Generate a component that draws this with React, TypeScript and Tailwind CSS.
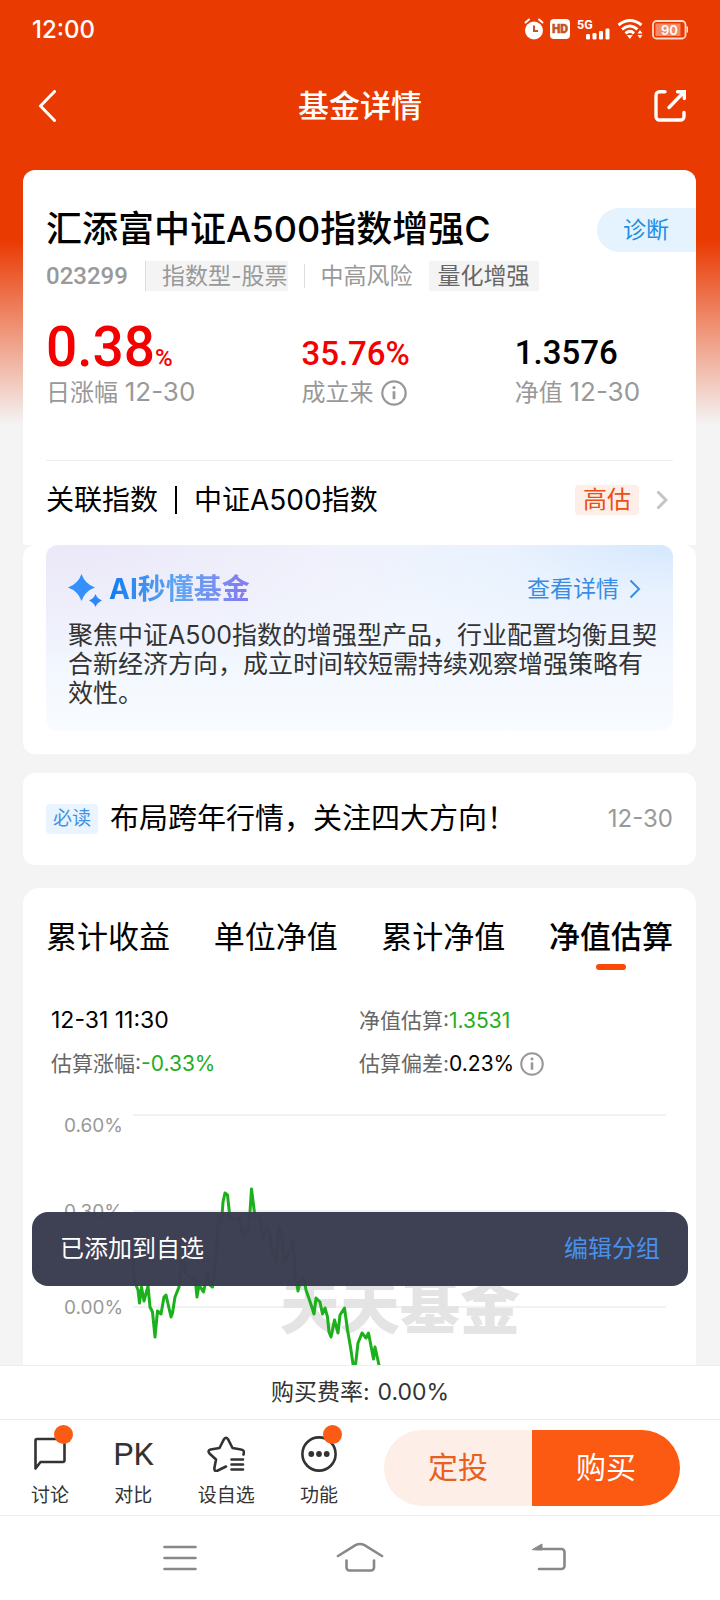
import React from "react";

const TABS = ["累计收益", "单位净值", "累计净值", "净值估算"];

const POINTS: [number, number][] = [
  [87, 150], [88, 180], [92, 190], [93.5, 203], [95.5, 187], [98, 201], [102, 186], [104, 207], [106.5, 212],
  [109, 237], [111.5, 211], [115, 214], [118, 197], [120, 195], [125, 217], [126.5, 213], [129, 197], [133, 187],
  [136, 160], [138, 160], [139.5, 173], [144.5, 178], [149, 177], [151, 197], [153, 185], [157.5, 192],
  [161.5, 173], [164, 185], [166.5, 187], [170, 157], [172.5, 118], [175.5, 123], [177, 102], [179, 93],
  [181.5, 95], [184, 118], [188, 119], [193, 118], [196, 132], [198.5, 136], [203, 127], [205.5, 89], [209, 117],
  [214, 116], [217, 139], [221, 127], [223.5, 132], [226, 150], [230, 162], [232.5, 127], [235.5, 133],
  [238.5, 162], [243, 153], [247, 140], [249.5, 177], [252, 191], [254.5, 180], [258, 179], [260, 190],
  [263.5, 200], [268, 214], [270, 198], [274, 202], [276.5, 214], [279, 208], [281.5, 217], [283, 232],
  [285, 237], [288.5, 220], [292, 233], [294, 215], [298.5, 208], [301.5, 230], [304.5, 247], [307, 264],
  [309.5, 265], [312, 243], [316, 233], [320, 238], [322.5, 233], [327.5, 259], [329, 247], [333, 265], [336, 285],
];

const GRID = [
  { y: 15, label: "0.60%", labelY: 32 },
  { y: 111, label: "0.30%", labelY: 118 },
  { y: 207, label: "0.00%", labelY: 214 },
];

function InfoIcon({ className }: { className: string }) {
  return (
    <svg viewBox="0 0 26 26" className={className} fill="none" stroke="currentColor" aria-hidden="true">
      <circle cx="13" cy="13" r="11.7" strokeWidth="2.2" />
      <circle cx="13" cy="7.6" r="1.6" fill="currentColor" stroke="none" />
      <path d="M13 11.2v8" strokeWidth="2.8" />
    </svg>
  );
}

function Chevron({ className }: { className: string }) {
  return (
    <svg viewBox="0 0 12 20" className={className} fill="none" stroke="currentColor" aria-hidden="true">
      <path d="M1.5 1.5 10 10l-8.5 8.5" />
    </svg>
  );
}

function StatusBar() {
  return (
    <div className="flex h-[58px] items-center justify-between pr-[32px] pl-8 text-white">
      <span className="mt-px text-2xl font-medium">12:00</span>
      <svg viewBox="0 0 164 24" className="h-6 w-[164px]" fill="none" aria-hidden="true">
        <g>
          <circle cx="10" cy="13.5" r="9" fill="#fff" />
          <path d="M1.500 5.500 5 2.500M18.500 5.500 15 2.500" stroke="#fff" strokeWidth="2" strokeLinecap="round" />
          <path d="M10 8.500v5.500h4" stroke="#c4532c" strokeWidth="2" />
        </g>
        <g>
          <rect x="26" y="2" width="20" height="20" rx="4" fill="#fff" />
          <text x="36" y="16.300" fontSize="12" fontFamily="Roboto, sans-serif" fontWeight="900" textAnchor="middle" fill="#c4532c" stroke="#c4532c" strokeWidth="0.500">HD</text>
        </g>
        <g fill="#fff">
          <text x="53" y="11.500" fontSize="12.500" fontWeight="700" fontFamily="Roboto, sans-serif">5G</text>
          <rect x="62" y="17" width="4" height="5.500" rx="1.200" />
          <rect x="68.5" y="16" width="4" height="6.500" rx="1.200" />
          <rect x="75" y="14" width="4" height="8.500" rx="1.200" />
          <rect x="81.5" y="11.500" width="4" height="11" rx="1.200" />
        </g>
        <g stroke="#fff" strokeWidth="3">
          <path d="M94.500 8q11.500-9 23 0" />
          <path d="M98 12.300q8-6.500 15.500 0" />
          <path d="M101.500 16.300q4.500-3.800 8.500 0" />
          <path d="M102.800 18h6l-3 4z" fill="#fff" stroke="none" />
          <path d="M113.500 16.500h5l-2.500-3.500zM113.500 18h5l-2.500 3.500z" fill="#fff" stroke="none" />
        </g>
        <g>
          <rect x="129" y="4" width="32.500" height="17.500" rx="3.500" stroke="#ffd9c9" strokeWidth="1.800" />
          <rect x="131.500" y="6.500" width="25" height="12.500" fill="#f58a67" />
          <rect x="162.500" y="9.500" width="1.500" height="6" fill="#ffd9c9" />
          <text x="145.500" y="17.500" fontSize="13" fontWeight="600" textAnchor="middle" fill="#fff">90</text>
        </g>
      </svg>
    </div>
  );
}

function Header() {
  return (
    <header className="shrink-0">
      <StatusBar />
      <div className="flex h-24 items-center justify-between pr-[34px] pl-[38px] text-white">
        <button aria-label="返回" className="flex w-7">
          <svg viewBox="0 0 18 32" className="h-8 w-[18px]" fill="none" stroke="currentColor" strokeWidth="3" strokeLinecap="round" strokeLinejoin="round">
            <path d="M16.500 1.500 2.500 16l14 14.500" />
          </svg>
        </button>
        <h1 className="text-[31px] font-medium">基金详情</h1>
        <button aria-label="分享" className="flex w-8">
          <svg viewBox="0 0 32 32" className="size-8" fill="none" stroke="currentColor" strokeWidth="3.4" strokeLinecap="round">
            <path d="M11 1.700H5.500a3.500 3.500 0 0 0-3.500 3.500V26.500A3.500 3.500 0 0 0 5.500 30h21a3.500 3.500 0 0 0 3.500-3.500V22.500" />
            <path d="M15 17.500 29 3M23.500 1.700h6.800V8.500" />
          </svg>
        </button>
      </div>
    </header>
  );
}

function SummaryCard() {
  return (
    <section className="rounded-t-xl bg-white px-[23px] pt-[35px]">
      <div className="-mr-[23px] flex h-12 items-center justify-between">
        <h2 className="text-[36px] font-medium text-black">汇添富中证A500指数增强C</h2>
        <button className="mt-[2px] h-11 rounded-l-full bg-[#e5f3fe] pr-[27px] pl-[26px] text-[23px] text-[#1c90e6]">诊断</button>
      </div>
      <div className="mt-2 flex h-[30px] items-center text-[23px] leading-[30px] text-[#999]">
        <span className="w-[99px] font-['Roboto',sans-serif] text-2xl font-medium">023299</span>
        <span className="border-l border-[#ddd] bg-[#f4f4f4] pl-4">指数型-股票</span>
        <span className="ml-4 h-6 w-px bg-[#ddd]" />
        <span className="ml-4">中高风险</span>
        <span className="ml-4 bg-[#f4f4f4] px-[9px] text-[#666]">量化增强</span>
      </div>
      <dl className="mt-[19px] grid grid-cols-[255fr_213fr_158fr] text-2xl text-[#999]">
        <div className="flex flex-col-reverse">
          <dt className="leading-[33px]">日涨幅 <span className="text-[26px]">12-30</span></dt>
          <dd className="flex h-[65px] items-baseline font-['Roboto',sans-serif] font-medium text-[#f40000]">
            <span className="text-[55px] leading-[74px]">0.38</span>
            <span className="text-[24px]">%</span>
          </dd>
        </div>
        <div className="flex flex-col-reverse">
          <dt className="flex items-center gap-2 leading-[33px]">
            成立来
            <InfoIcon className="size-[26px]" />
          </dt>
          <dd className="font-['Roboto',sans-serif] text-[33px] leading-[44px] font-medium text-[#f40000]">35.76%</dd>
        </div>
        <div className="flex flex-col-reverse">
          <dt className="leading-[33px]">净值 <span className="text-[26px]">12-30</span></dt>
          <dd className="font-['Roboto',sans-serif] text-[33px] leading-[44px] font-medium text-black">1.3576</dd>
        </div>
      </dl>
      <div className="mt-[51px] border-t border-[#eee] pb-[7px]">
        <a href="#index" className="flex h-[77px] items-center text-[28px] text-black">
          <span>关联指数</span>
          <span className="mr-[17px] ml-[17px] h-7 w-[2px] bg-black" />
          <span>中证A500指数</span>
          <span className="ml-auto rounded bg-[#feeee8] px-2 text-2xl leading-[30px] text-[#ea4f14]">高估</span>
          <Chevron className="mr-[5px] ml-[17px] h-5 w-3 stroke-3 text-[#c4c4c4]" />
        </a>
      </div>
    </section>
  );
}

function AiCard() {
  return (
    <section className="rounded-xl bg-white px-[23px] pb-[23px]">
      <div className="rounded-xl bg-[linear-gradient(rgba(248,252,255,0)_50%,#f9fcff_100%),radial-gradient(ellipse_at_100%_0%,#d5e8fe_0%,rgba(225,238,254,0.6)_18%,rgba(240,246,255,0)_40%),radial-gradient(ellipse_at_0%_0%,#ebe8f9_0%,rgba(238,237,250,0.8)_25%,rgba(243,245,253,0)_50%),linear-gradient(#f4f7fe,#eef5ff)] pt-6 pr-[11px] pb-[23px] pl-[22px]">
        <div className="flex h-10 items-center">
          <svg viewBox="0 0 34 34" className="mt-1 h-[34px] w-[34px]" aria-hidden="true">
            <path d="M13.500 0Q17 10 27 13.500 17 17 13.500 27 10 17 0 13.500 10 10 13.500 0Z" fill="#3690fb" />
            <path d="M27.500 20Q29 24.500 34 26.500 29 28.500 27.500 33 26 28.500 21 26.500 26 24.500 27.500 20Z" fill="#2f86f7" />
          </svg>
          <h3 className="ml-[7px] bg-linear-to-r from-[#087cf0] via-[#5fa5f5] to-[#8479ee] bg-clip-text text-[28px] font-bold text-transparent">AI秒懂基金</h3>
          <a href="#detail" className="mr-[21px] ml-auto flex items-center gap-[10px] text-[23px] text-[#3a8de2]">
            查看详情
            <Chevron className="h-5 w-3 stroke-2" />
          </a>
        </div>
        <p className="mt-3 text-[25px] leading-[29px] text-[#333]">
          聚焦中证A500指数的增强型产品，行业配置均衡且契合新经济方向，成立时间较短需持续观察增强策略有效性。
        </p>
      </div>
    </section>
  );
}

function NoticeCard() {
  return (
    <a href="#notice" className="mt-[19px] flex h-[92px] items-center rounded-xl bg-white px-[23px]">
      <span className="rounded bg-[#e9f4ff] px-[7px] text-[19px] leading-[30px] text-[#3d92e4]">必读</span>
      <span className="ml-3 text-[29px] text-black">布局跨年行情，关注四大方向！</span>
      <time className="ml-auto text-2xl text-[#999]">12-30</time>
    </a>
  );
}

function ChartCard() {
  return (
    <section className="mt-[23px] rounded-t-2xl bg-white px-[23px] pt-[29px]">
      <div role="tablist" className="flex justify-between text-[31px] text-black">
        {TABS.map((tab) => {
          const active = tab === "净值估算";
          return (
            <button key={tab} role="tab" aria-selected={active} className="flex flex-col items-center">
              <span className={active ? "leading-10 font-medium" : "leading-10"}>{tab}</span>
              {active && <span className="mt-[7px] h-[6px] w-[30px] rounded-[3px] bg-[#fb4a08]" />}
            </button>
          );
        })}
      </div>
      <div className="mt-[29px] grid grid-cols-[308fr_314fr] pl-[5px] text-[21px] leading-[43px] text-[#666]">
        <time className="text-[23px] text-black">12-31 11:30</time>
        <span>净值估算:<span className="text-[#1fae1f]">1.3531</span></span>
        <span>估算涨幅:<span className="text-[#1fae1f]">-0.33%</span></span>
        <span className="flex items-center">
          估算偏差:<span className="text-black">0.23%</span>
          <InfoIcon className="ml-[6px] size-6 text-[#999]" />
        </span>
      </div>
      <svg viewBox="0 0 627 320" className="mt-[15px] block w-full" role="img" aria-label="净值估算走势">
        <text x="234" y="229" fontSize="60" fontWeight="900" fill="#e4e4e4">天天基金</text>
        {GRID.map((g) => (
          <g key={g.label}>
            <line x1="87" x2="620" y1={g.y} y2={g.y} stroke="#e4e4e4" strokeWidth="1" />
            <text x="18" y={g.labelY} fontSize="19" fill="#999">{g.label}</text>
          </g>
        ))}
        <polyline points={POINTS.map((p) => p.join(",")).join(" ")} fill="none" stroke="#1cb01c" strokeWidth="3" strokeLinejoin="round" />
      </svg>
    </section>
  );
}

function Toast() {
  return (
    <div role="status" className="absolute inset-x-8 bottom-[79px] flex h-[74px] items-center justify-between rounded-2xl bg-[#3a3c50]/98 px-7 text-2xl text-white">
      <span>已添加到自选</span>
      <button className="text-[#4890ea]">编辑分组</button>
    </div>
  );
}

function Action({ label, badge, children }: { label: string; badge?: boolean; children: React.ReactNode }) {
  return (
    <button className="flex flex-col items-center">
      <span className="relative flex h-10 w-9 items-center justify-center">
        {children}
        {badge && <span className="absolute -top-[9px] -right-[5px] size-[19px] rounded-full bg-[#fb5b14]" />}
      </span>
      <span className="mt-2 text-[19px] leading-7">{label}</span>
    </button>
  );
}

function BottomBar() {
  return (
    <footer className="shrink-0 bg-white text-[#333]">
      <div className="flex h-[54px] items-center justify-center gap-2 border-t border-[#eee] text-[23px]">
        <span>购买费率:</span>
        <span>0.00%</span>
      </div>
      <div className="flex h-24 items-center border-t border-[#eaeaea] pr-10 pl-[31px]">
        <div className="flex flex-[307] justify-between pt-2">
          <Action label="讨论" badge>
            <svg viewBox="0 0 32 34" className="h-[34px] w-8" fill="none" stroke="#333" strokeWidth="2.6" strokeLinejoin="round">
              <path d="M1.500 31.500V3.500a1.500 1.500 0 0 1 1.500-1.500H29a1.500 1.500 0 0 1 1.500 1.500V23.500a1.500 1.500 0 0 1-1.500 1.500H6.500z" />
            </svg>
          </Action>
          <Action label="对比">
            <span className="font-['Roboto',sans-serif] text-[32px] leading-10">PK</span>
          </Action>
          <Action label="设自选">
            <svg viewBox="0 0 38 36" className="h-9 w-[38px] shrink-0" fill="none" stroke="#333" strokeWidth="2.6" strokeLinejoin="round" strokeLinecap="round">
              <path d="M36.500 18.500Q38 14 34 13.500L25.500 12 21 3.200Q19 .2 17 3.200L12.500 12 3.500 13.500Q.2 14.500 2.500 17.500L9 23.500 7.300 32.500Q7.500 36 10.800 34.500L19 30.500" />
              <path d="M24.500 23.500H36M24.500 28.500H36M24.500 33.500H36" />
            </svg>
          </Action>
          <Action label="功能" badge>
            <svg viewBox="0 0 36 36" className="size-9" fill="none" stroke="#333" strokeWidth="2.6">
              <circle cx="18" cy="18" r="16.6" />
              <g fill="#333" stroke="none">
                <circle cx="10.3" cy="18" r="2.9" />
                <circle cx="18" cy="18" r="2.9" />
                <circle cx="25.7" cy="18" r="2.9" />
              </g>
            </svg>
          </Action>
        </div>
        <div className="ml-[46px] flex h-[76px] flex-[296] overflow-hidden rounded-full text-[30px]">
          <button className="flex-1 bg-[#fdeee7] text-[#e8601f]">定投</button>
          <button className="flex-1 bg-[#fc5a13] text-white">购买</button>
        </div>
      </div>
      <nav className="grid h-[85px] grid-cols-3 items-center border-t border-[#eee] px-[90px] text-[#888]">
        <button aria-label="最近任务" className="flex justify-center">
          <svg viewBox="0 0 48 32" className="h-8 w-12" fill="none" stroke="currentColor" strokeWidth="2.6" strokeLinecap="round">
            <path d="M8.500 5h31M8.500 16h31M8.500 27h31" />
          </svg>
        </button>
        <button aria-label="主屏幕" className="flex justify-center">
          <svg viewBox="0 0 48 32" className="h-8 w-12" fill="none" stroke="currentColor" strokeWidth="2.6" strokeLinecap="round" strokeLinejoin="round">
            <path d="M2 14 19.500 3.200Q24 .8 28.500 3.200L46 14" />
            <path d="M10.500 18.500V25.500a3 3 0 0 0 3 3H35a3 3 0 0 0 3-3V18.500" />
          </svg>
        </button>
        <button aria-label="返回上一页" className="flex justify-center">
          <svg viewBox="-11 0 52 32" className="h-8 w-[52px]" fill="none" stroke="currentColor" strokeWidth="2.6" strokeLinecap="round" strokeLinejoin="round">
            <path d="M11 7H36.500a3 3 0 0 1 3 3V24a3 3 0 0 1-3 3H14" />
            <path d="M7.500 7.500 17 2v5.500z" fill="currentColor" strokeWidth="1" />
          </svg>
        </button>
      </nav>
    </footer>
  );
}

export default function App() {
  return (
    <div className="flex h-screen flex-col bg-[#f4f4f4] bg-[linear-gradient(#e93a02_0px,#e93a02_240px,#f4f4f4_425px)] font-['Inter','Noto_Sans_CJK_SC',sans-serif]">
      <Header />
      <div className="relative min-h-0 flex-1">
        <main className="h-full overflow-y-auto pt-4 pr-6 pl-[23px] [scrollbar-width:none]">
          <SummaryCard />
          <AiCard />
          <NoticeCard />
          <ChartCard />
        </main>
        <Toast />
      </div>
      <BottomBar />
    </div>
  );
}
